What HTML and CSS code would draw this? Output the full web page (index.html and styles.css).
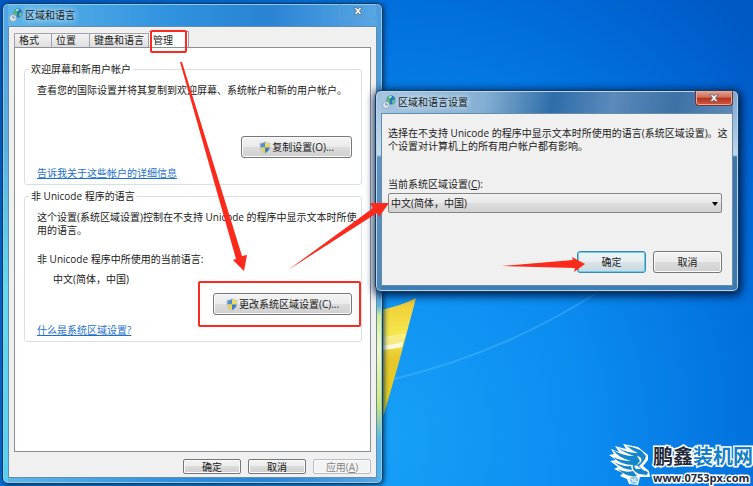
FILE: index.html
```html
<!DOCTYPE html>
<html lang="zh-CN">
<head>
<meta charset="utf-8">
<title>区域和语言</title>
<link rel="stylesheet" href="styles.css">
</head>
<body>
<svg class="defs" aria-hidden="true">
  <defs>
    <symbol id="shield" viewBox="0 0 12 13">
      <path d="M6 0C4.500 1.300 2.500 1.800.5 1.800V6C.5 9.500 3 12 6 13 9 12 11.500 9.500 11.500 6V1.800C9.500 1.800 7.500 1.300 6 0Z" fill="#c3cbd2"/>
      <path d="M6 1.200V6.500H1.500V2.700C3.200 2.600 4.800 2.100 6 1.200Z" fill="#4a90d8"/>
      <path d="M6 1.200V6.500H10.500V2.700C8.800 2.600 7.200 2.100 6 1.200Z" fill="#f4d850"/>
      <path d="M1.500 6.500H6V12C3.400 11 1.600 9 1.500 6.500Z" fill="#f0d24a"/>
      <path d="M6 6.500H10.500C10.400 9 8.600 11 6 12Z" fill="#3b7fc6"/>
    </symbol>
    <symbol id="region" viewBox="0 0 14 14">
      <circle cx="9" cy="5" r="4.500" fill="#2476c4"/>
      <path d="M5 3.500C6 1.200 8.500.3 10 .8L9.500 3 7.500 4.500 8.500 6.500 7 8 5 6.500Z" fill="#54ba69"/>
      <path d="M10.500 5L13 4.500 12 8 10 9Z" fill="#74c86d"/>
      <path d="M6.500 2C7.500 1 9 1 10 1.500L8 3Z" fill="#d9f5ec"/>
      <circle cx="4" cy="10" r="3.500" fill="#dbe7ee" stroke="#8ba9bd"/>
      <path d="M4 7.800V10H5.800" fill="none" stroke="#688496"/>
    </symbol>
    <symbol id="cross" viewBox="0 0 10 8">
      <path d="M1 .7H3.600L5 2.300 6.400.7H9L6.500 4 9 7.300H6.400L5 5.700 3.600 7.300H1L3.500 4Z" fill="#fff" stroke="#596775" stroke-width=".8"/>
    </symbol>
  </defs>
</svg>

<main class="desktop">
  <svg class="wallpaper" viewBox="0 0 753 486" preserveAspectRatio="none" aria-hidden="true">
    <defs>
      <linearGradient id="flag" x1="0" y1="0" x2="0" y2="1">
        <stop offset="0" stop-color="#f0c933"/><stop offset=".3" stop-color="#f4e84d"/>
        <stop offset=".5" stop-color="#e7c72b"/><stop offset="1" stop-color="#e7d513"/>
      </linearGradient>
    </defs>
    <path d="M380 310Q401 306 416 298L399 362 384 414 380 420Z" fill="url(#flag)"/>
    <path d="M380 337Q394 336 406 333L402 347Q391 349 380 349Z" fill="#fbf0a8" opacity=".65"/>
    <path d="M380 345Q392 346 403 342L402 347Q391 350 380 350Z" fill="#fffbe0"/>
    <path d="M394 379Q500 354 595 294" fill="none" stroke="#5cc5ff" stroke-width="2" opacity=".35"/>
  </svg>

  <section class="window region-window" aria-label="区域和语言">
    <header class="titlebar">
      <svg class="app-icon" aria-hidden="true"><use href="#region"/></svg>
      <h1 class="title">区域和语言</h1>
      <button class="close" type="button" aria-label="关闭"><svg aria-hidden="true"><use href="#cross"/></svg></button>
    </header>
    <div class="client">
      <div class="tabs" role="tablist">
        <button class="tab" type="button" role="tab">格式</button>
        <button class="tab" type="button" role="tab">位置</button>
        <button class="tab" type="button" role="tab">键盘和语言</button>
        <button class="tab active" type="button" role="tab" aria-selected="true">管理</button>
      </div>
      <div class="panel" role="tabpanel">
        <fieldset class="group">
          <legend>欢迎屏幕和新用户帐户</legend>
          <p>查看您的国际设置并将其复制到欢迎屏幕、系统帐户和新的用户帐户。</p>
          <button class="button copy" type="button"><svg class="shield" aria-hidden="true"><use href="#shield"/></svg>复制设置(O)...</button>
          <a class="link" href="#">告诉我关于这些帐户的详细信息</a>
        </fieldset>
        <fieldset class="group">
          <legend>非 Unicode 程序的语言</legend>
          <p>这个设置(系统区域设置)控制在不支持 Unicode 的程序中显示文本时所使<br>用的语言。</p>
          <p class="current-label">非 Unicode 程序中所使用的当前语言:</p>
          <p class="current-value">中文(简体，中国)</p>
          <button class="button change" type="button"><svg class="shield" aria-hidden="true"><use href="#shield"/></svg>更改系统区域设置(C)...</button>
          <a class="link" href="#">什么是系统区域设置?</a>
        </fieldset>
      </div>
      <footer class="footer">
        <button class="button" type="button">确定</button>
        <button class="button" type="button">取消</button>
        <button class="button" type="button" disabled>应用(<u>A</u>)</button>
      </footer>
    </div>
  </section>

  <section class="window locale-window" role="dialog" aria-label="区域和语言设置">
    <header class="titlebar">
      <svg class="app-icon" aria-hidden="true"><use href="#region"/></svg>
      <h2 class="title">区域和语言设置</h2>
      <button class="close danger" type="button" aria-label="关闭"><svg aria-hidden="true"><use href="#cross"/></svg></button>
    </header>
    <div class="client">
      <p>选择在不支持 Unicode 的程序中显示文本时所使用的语言(系统区域设置)。这<br>个设置对计算机上的所有用户帐户都有影响。</p>
      <label class="locale-label" for="locale">当前系统区域设置(<u>C</u>):</label>
      <div class="select-wrap">
        <select id="locale"><option>中文(简体，中国)</option></select>
      </div>
      <footer class="actions">
        <button class="button primary" type="button">确定</button>
        <button class="button" type="button">取消</button>
      </footer>
    </div>
  </section>

  <div class="brand">
    <svg class="brand-bird" viewBox="0 0 44 42" aria-hidden="true">
      <path d="M2 5L10 8 6 2 17 5 14 0 29 3 39 11 39 16 34 22 40 27 41 33 31 33 29 41 20 40 18 35 11 32 14 29 5 25 9 23 1 17 7 16 0 11 5 10Z" fill="#fff"/>
      <g fill="#1686ca">
        <path d="M4 6Q14 12 25 12 14 8 9 4 18 9 29 9 22 6 18 2 32 4 37 12 36 17 30 22L34 26 39 28 38 31 30 30Q22 26 24 21 12 21 4 13 12 17 22 17 10 14 4 6Z"/>
        <path d="M5 18Q14 23 22 22L23 26Q13 25 5 18ZM9 25Q16 29 24 27L28 32 22 32Q15 31 9 25Z"/>
      </g>
      <path d="M28 12Q34 13 32 18L27 22 31 17ZM25 22Q28 20 32 25L27 25Z" fill="#fff"/>
      <circle cx="25" cy="36" r="4" fill="#8bc8ea"/>
      <path d="M22 35L28 38M23 38L27 34" stroke="#fff"/>
    </svg>
    <div class="brand-text">
      <div class="brand-name">鹏鑫<span>装机网</span></div>
      <div class="brand-url">www.0753px.com</div>
    </div>
  </div>

  <svg class="marks" width="753" height="486" aria-hidden="true">
    <g fill="none" stroke="#f92a20" stroke-width="2">
      <rect x="151" y="31" width="35" height="21" rx="1"/>
      <rect x="199" y="282" width="161" height="44" rx="1"/>
    </g>
    <g fill="#fb2a1c">
      <path d="M180 62L182 62 242 256 247 255 244 271 233 260 236 259Z"/>
      <path d="M288 270L373 208 370 203 389 203 379 217 377 213Z"/>
      <path d="M502 266L573 260 572 257 585 264 574 272 575 268Z"/>
    </g>
  </svg>
</main>
</body>
</html>
```
FILE: styles.css
```css
* { box-sizing: border-box; }

body {
  margin: 0;
  font: 10px/14px "Open Sans", "Noto Sans CJK SC", sans-serif;
  color: #202020;
}

button, select { font: inherit; color: inherit; }
p, h1, h2 { margin: 0; font-size: inherit; font-weight: normal; }

.defs { position: absolute; width: 0; height: 0; }

.desktop {
  position: relative;
  min-height: 100vh;
  overflow: hidden;
  background: radial-gradient(ellipse 68% 120% at 51% 90%, #18a0f8 0%, #0b8cf0 40%, #006cda 78%, #0058c4 100%);
}

.wallpaper { position: absolute; width: 100%; height: 100%; }

/* Glass window frame */
.window {
  position: absolute;
  display: flex;
  flex-direction: column;
  padding: 0 5px 5px;
  border: 1px solid #173b5c;
  border-radius: 6px;
  white-space: nowrap;
}

.region-window {
  top: 3px;
  bottom: 2px;
  left: 2px;
  width: 381px;
  background:
    linear-gradient(#4b9ce0 0 55%, #5fb4e4 63%, #d5ed8d 65%, #f7f8bd 72%, #cfe66d 84%, #59b5e8 91%, #4db5f0) right / 5px 100% no-repeat,
    linear-gradient(#50a4e7, #58b2e0 30%, #62dbf0 60%, #55cff0) left / 5px 100% no-repeat,
    linear-gradient(90deg, #60b6e7, #2f91df 45%, #2a83d4 70%, #5aa8e5);
  box-shadow: inset 0 0 0 1px #8dcaf0, 1px 1px 5px #06345f;
}

.locale-window {
  top: 90px;
  left: 375px;
  width: 364px;
  background:
    linear-gradient(#9cc0df, #c4dcee 32%, #5f93c0 33%, #4f86b6) left / 5px 100% no-repeat,
    linear-gradient(#7ea6cc, #bed4e8 32%, #3f76aa 33%, #3d78ae) right / 5px 100% no-repeat,
    linear-gradient(#3f7db5, #3f7db5) bottom / 100% 6px no-repeat,
    linear-gradient(100deg, #a9c6df, #83aed2 28%, #2e6da9 45%, #5b8abb 60%, #3d71a7 76%, #7499be);
  box-shadow: inset 0 0 0 1px #b7d5ea, 1px 2px 9px 2px #001f4d;
}

.titlebar {
  display: flex;
  align-items: center;
  height: 22px;
  padding-left: 1px;
}

.app-icon { width: 14px; height: 14px; margin-right: 2px; }

.title { flex: 1; text-shadow: 0 0 6px #d6edff, 0 0 6px #d6edff; }

.close {
  display: flex;
  align-self: flex-start;
  align-items: center;
  justify-content: center;
  width: 38px;
  height: 15px;
  padding: 0;
  border: 1px solid #5f9bcf;
  border-top: 0;
  border-radius: 0 0 4px 4px;
  background: transparent;
}

.close svg { width: 10px; height: 8px; }

.close.danger {
  border-color: #6d3541;
  background: linear-gradient(#e3a493, #cf6c58 45%, #b63320 50%, #d0583c);
  box-shadow: inset 0 0 0 1px #e9a898;
}

.client {
  flex: 1;
  display: flex;
  flex-direction: column;
  padding: 4px 5px 3px;
  border: 1px solid #668da8;
  background: #f0f0f0;
}

/* Tabs */
.tabs { display: flex; align-items: flex-end; }

.tab {
  height: 14px;
  padding: 0 4px;
  border: 1px solid #a0a4aa;
  border-width: 1px 1px 0 0;
  background: linear-gradient(#f4f4f4, #dedede);
  line-height: 13px;
  min-width: 38px;
  text-align: left;
}

.tab:first-child { border-left-width: 1px; }

.tab.active {
  height: 17px;
  min-width: 40px;
  margin-bottom: -1px;
  background: #fff;
}

.panel {
  flex: 1;
  display: flex;
  flex-direction: column;
  gap: 4px;
  padding: 14px 8px 14px 9px;
  border: 1px solid #8b8f96;
  background: #fff;
}

.group {
  display: flex;
  flex-direction: column;
  align-items: flex-start;
  min-width: 0;
  margin: 0;
  padding: 8px 9px 4px 12px;
  border: 1px solid #d9dfe4;
  border-radius: 3px;
}

.group legend { margin-left: -8px; padding: 0 2px; }
.group p { line-height: 13px; }
.group .current-label { margin-top: 16px; }
.group .current-value { margin: 7px 0 0 16px; }

.link { margin-top: 8px; color: #1e70cc; }

.button {
  display: flex;
  align-items: center;
  justify-content: center;
  height: 22px;
  padding: 0;
  border: 1px solid #777;
  border-radius: 3px;
  background: linear-gradient(#f3f3f3, #ebebeb 48%, #dcdcdc 50%, #cfcfcf);
  box-shadow: inset 0 0 0 1px #fafafa;
}

.group .button { align-self: flex-end; }
.group .copy { width: 111px; margin-top: 39px; }
.group .change { width: 139px; margin-top: 7px; }
.shield { width: 12px; height: 13px; margin-right: 1px; }

.footer { display: flex; justify-content: flex-end; gap: 7px; padding-top: 7px; }
.footer .button { width: 58px; height: 15px; border-radius: 2px; }
.button:disabled { border-color: #b9bdc0; background: #f3f3f3; color: #858585; }

/* Locale dialog */
.locale-window .client { padding: 13px 10px 12px 6px; }
.locale-window p { line-height: 13px; }
.locale-label { margin-top: 24px; }

.select-wrap { position: relative; margin-top: 2px; }

.select-wrap::after {
  content: "";
  position: absolute;
  top: 9px;
  right: 4px;
  border: 3px solid transparent;
  border-top: 4px solid #000;
  border-bottom: 0;
  pointer-events: none;
}

select {
  display: block;
  width: 100%;
  height: 20px;
  padding: 0 2px;
  border: 1px solid #858585;
  border-radius: 2px;
  appearance: none;
  background: linear-gradient(#f1f1f1, #e9e9e9 48%, #dedede 50%, #d2d2d2);
}

.actions { display: flex; justify-content: flex-end; gap: 7px; margin-top: 38px; }
.actions .button { width: 69px; }

.primary {
  border-color: #398bb5;
  background: linear-gradient(#f0f5f7, #e6edf0 48%, #d9e2e7 50%, #cbd8df);
  box-shadow: inset 0 0 0 1px #66cdf0;
}

/* Site mark in the desktop corner */
.brand { position: absolute; right: 0; bottom: 0; display: flex; align-items: center; }
.brand-bird { width: 44px; height: 42px; }

.brand-text {
  color: #22283a;
  font-weight: bold;
  paint-order: stroke fill;
  -webkit-text-stroke: 3px #fff;
}

.brand-name { font-size: 20px; line-height: 26px; }
.brand-name span { color: #147fc6; }
.brand-url { font: bold 11px/16px "Open Sans", sans-serif; }

/* Red guide marks drawn above the windows */
.marks { position: absolute; top: 0; left: 0; pointer-events: none; }
```
